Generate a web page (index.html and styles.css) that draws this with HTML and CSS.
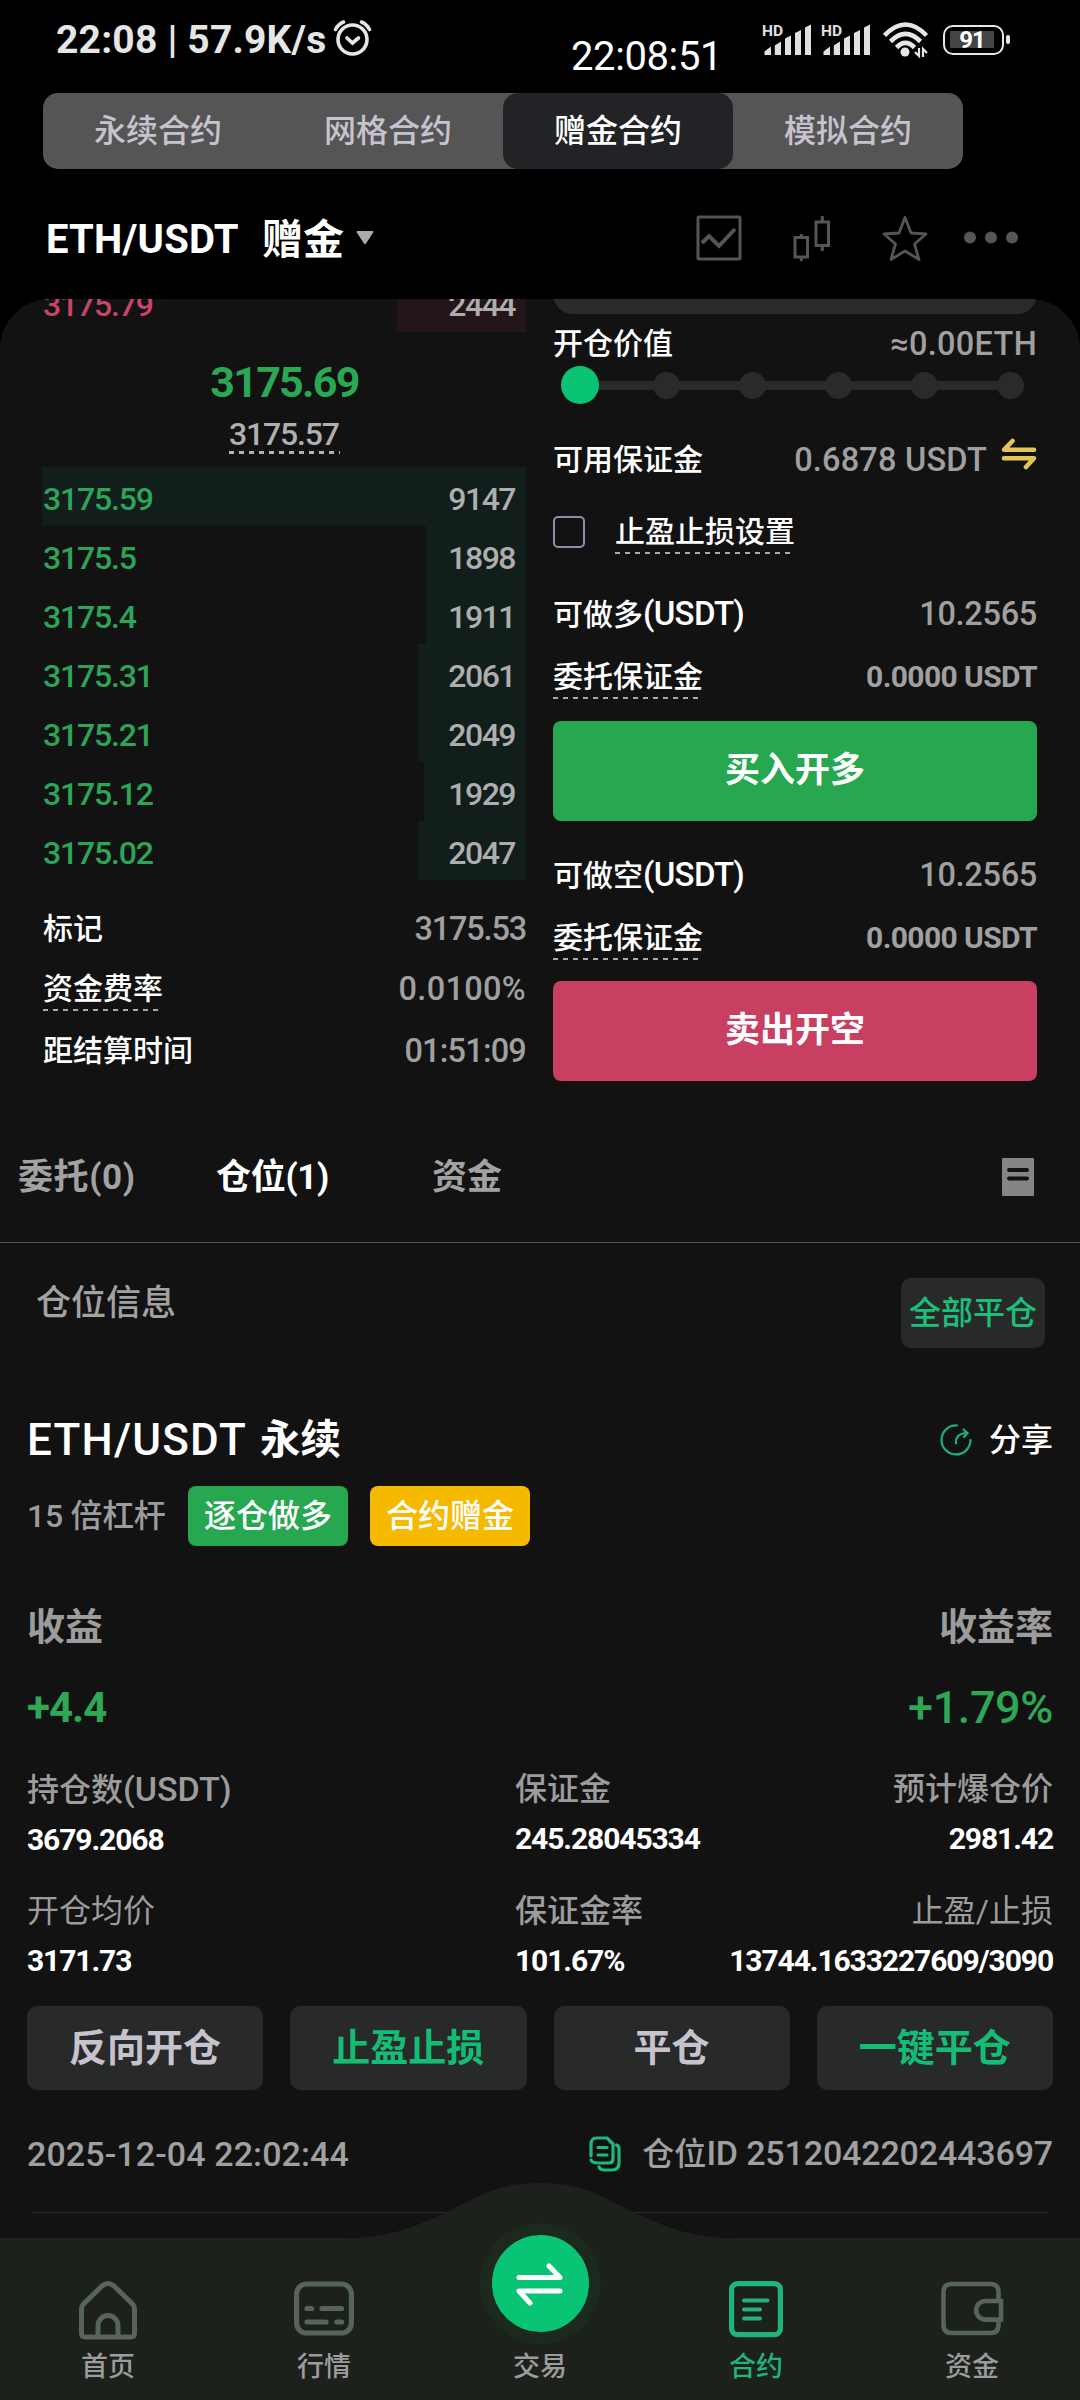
FILE: index.html
```html
<!DOCTYPE html>
<html lang="zh-CN">
<head>
<meta charset="utf-8">
<title>ETH/USDT 赠金合约</title>
<link rel="stylesheet" href="styles.css">
</head>
<body>
<div class="screen">
  <header class="status">
    <span class="status-time">22:08 | 57.9K/s</span>
    <svg class="status-alarm" width="40" height="38" viewBox="0 0 40 38" fill="none" stroke="#e6e6e6" stroke-width="3.6" stroke-linecap="round">
      <circle cx="20.500" cy="20.500" r="14.500"/><path d="M3.500 10.500Q6.500 5 11.500 3M29.500 3Q34.500 5 37.500 10.500M15 19l5.500 5 6-5"/>
    </svg>
    <span class="status-clock">22:08:51</span>
    <svg class="status-signal" width="50" height="34" viewBox="0 0 50 34" fill="#e0e0e0">
      <text class="hd" x="0" y="13">HD</text>
      <path d="M2.500 28.500l6.500-5V32H2.500zM12.800 22.500l6.200-4V32h-6.200zM23 15.500l6-3V32h-6zM33 10l6-3V32h-6zM43 4.500l6-3V32h-6z"/>
    </svg>
    <svg class="status-signal" width="50" height="34" viewBox="0 0 50 34" fill="#e0e0e0">
      <text class="hd" x="0" y="13">HD</text>
      <path d="M2.500 28.500l6.500-5V32H2.500zM12.800 22.500l6.200-4V32h-6.200zM23 15.500l6-3V32h-6zM33 10l6-3V32h-6zM43 4.500l6-3V32h-6z"/>
    </svg>
    <svg class="status-wifi" width="46" height="36" viewBox="0 0 46 36" fill="none" stroke="#e6e6e6" stroke-width="4.600">
      <path d="M1.500 13.500Q22.500-8.500 43.500 13.500M7.500 19.500Q22.500 4.500 37.500 19.500M13.500 25.500Q22.500 16.500 31.500 25.500"/>
      <circle cx="22" cy="30" r="4.500" fill="#e6e6e6" stroke="none"/>
      <path stroke-width="2.200" d="M36 26v8l-4-4M40 35v-8l4 4"/>
    </svg>
    <span class="battery"><span class="battery-level">91</span></span>
    <span class="battery-tip"></span>
  </header>

  <nav class="modes">
    <span class="mode">永续合约</span>
    <span class="mode">网格合约</span>
    <span class="mode mode-on">赠金合约</span>
    <span class="mode">模拟合约</span>
  </nav>

  <div class="pair">
    <span class="pair-name">ETH/USDT</span>
    <span class="pair-kind">赠金</span>
    <svg class="pair-caret" width="18" height="14" viewBox="0 0 18 14"><path d="M1.500 0h15q1.500 0 .7 1.500L10 12.500q-1 1.300-2 0L.8 1.500Q0 0 1.500 0z" fill="#aaa"/></svg>
    <div class="pair-tools">
      <svg width="46" height="46" viewBox="0 0 46 46" fill="none" stroke="#555" stroke-width="3"><rect x="2" y="2" width="42" height="42" rx="1"/><path stroke-width="4" d="M6 28l7-7 10 10 16-17"/></svg>
      <svg width="38" height="46" viewBox="0 0 38 46" fill="none" stroke="#555" stroke-width="3"><path d="M2 22.500h12.500V42H2zM8.300 19v3.500M8.300 42v4M23 7h12.500v23.500H23zM29.300 1v6M29.300 30.500V36"/></svg>
      <svg width="46" height="46" viewBox="0 0 46 46" fill="none" stroke="#555" stroke-width="2.800" stroke-linejoin="round"><path d="M23 2.500l6 15.500 15 1-11.500 10L37 44.500 23 36 9 44.500 13.500 29 2 19l15-1z"/></svg>
      <svg width="54" height="46" viewBox="0 0 54 46" fill="#555"><circle cx="6" cy="22.500" r="6"/><circle cx="27" cy="22.500" r="6"/><circle cx="48" cy="22.500" r="6"/></svg>
    </div>
  </div>

  <main class="panel">
    <section class="trade">
      <div class="book">
        <div class="level ask"><i class="depth" style="width:129px"></i><span>3175.79</span><b>2444</b></div>
        <div class="last">3175.69</div>
        <div class="index">3175.57</div>
        <div class="level"><i class="depth" style="width:484px"></i><span>3175.59</span><b>9147</b></div>
        <div class="level"><i class="depth" style="width:100px"></i><span>3175.5</span><b>1898</b></div>
        <div class="level"><i class="depth" style="width:100px"></i><span>3175.4</span><b>1911</b></div>
        <div class="level"><i class="depth" style="width:108px"></i><span>3175.31</span><b>2061</b></div>
        <div class="level"><i class="depth" style="width:108px"></i><span>3175.21</span><b>2049</b></div>
        <div class="level"><i class="depth" style="width:102px"></i><span>3175.12</span><b>1929</b></div>
        <div class="level"><i class="depth" style="width:108px"></i><span>3175.02</span><b>2047</b></div>
        <div class="stats">
          <div class="stat"><span>标记</span><em class="num num-tight">3175.53</em></div>
          <div class="stat"><span class="dashed">资金费率</span><em class="num num-wide">0.0100%</em></div>
          <div class="stat"><span>距结算时间</span><em class="num num-time">01:51:09</em></div>
        </div>
      </div>

      <div class="form">
        <div class="amount"></div>
        <div class="field f-value"><span>开仓价值</span><em class="num num-wide">≈0.00ETH</em></div>
        <div class="slider"><i class="knob"></i><i class="stop"></i><i class="stop"></i><i class="stop"></i><i class="stop"></i><i class="stop"></i></div>
        <div class="field f-avail"><span>可用保证金</span>
          <em class="num num-avail">0.6878 USDT</em>
          <svg class="swap" width="36" height="32" viewBox="0 0 36 32" fill="none" stroke="#e5c457" stroke-width="4.600" stroke-linecap="round" stroke-linejoin="round"><path d="M33 11.800H3L11.500 3M3 20.200h30L25 29"/></svg>
        </div>
        <div class="field f-check"><i class="checkbox"></i><span class="dashed">止盈止损设置</span></div>
        <div class="field f-can"><span>可做多<small>(USDT)</small></span><em class="num">10.2565</em></div>
        <div class="field f-margin"><span class="dashed">委托保证金</span><em class="din">0.0000 USDT</em></div>
        <button class="order buy">买入开多</button>
        <div class="field f-can2"><span>可做空<small>(USDT)</small></span><em class="num">10.2565</em></div>
        <div class="field f-margin2"><span class="dashed">委托保证金</span><em class="din">0.0000 USDT</em></div>
        <button class="order sell">卖出开空</button>
      </div>
    </section>

    <nav class="tabs">
      <span class="tab">委托(0)</span>
      <span class="tab tab-on">仓位(1)</span>
      <span class="tab">资金</span>
      <svg class="tabs-icon" width="32" height="38" viewBox="0 0 32 38"><rect width="32" height="38" rx="1" fill="#858585"/><path d="M7 12h18M7 20.500h18" stroke="#121212" stroke-width="4" stroke-linecap="round"/></svg>
    </nav>

    <div class="info"><span>仓位信息</span><button class="close-all">全部平仓</button></div>

    <article class="position">
      <div class="title">
        <h2>ETH/USDT</h2><h3>永续</h3>
        <svg class="share-icon" width="32" height="32" viewBox="0 0 32 32" fill="none" stroke="#1fae7a" stroke-width="2.200" stroke-linecap="round"><path d="M17 1.500A14.500 14.500 0 1 0 30.500 16M16 19.500q-1-10 11-10.500M23.500 5.500l4 3.500-3.500 4"/></svg>
        <span class="share">分享</span>
      </div>
      <div class="badges"><span class="lever">15 倍杠杆</span><span class="badge long">逐仓做多</span><span class="badge bonus">合约赠金</span></div>
      <div class="pnl-head"><span>收益</span><span>收益率</span></div>
      <div class="pnl"><span class="pnl-abs">+4.4</span><span class="pnl-pct">+1.79%</span></div>
      <div class="facts">
        <div class="fact"><span>持仓数<small>(USDT)</small></span><b>3679.2068</b></div>
        <div class="fact"><span>保证金</span><b>245.28045334</b></div>
        <div class="fact"><span>预计爆仓价</span><b>2981.42</b></div>
        <div class="fact"><span class="thin">开仓均价</span><b>3171.73</b></div>
        <div class="fact"><span>保证金率</span><b>101.67%</b></div>
        <div class="fact"><span class="thin">止盈/止损</span><b>13744.1633227609/3090</b></div>
      </div>
      <div class="actions">
        <button class="action">反向开仓</button>
        <button class="action action-green">止盈止损</button>
        <button class="action">平仓</button>
        <button class="action action-green">一键平仓</button>
      </div>
      <div class="meta">
        <span class="date">2025-12-04 22:02:44</span>
        <svg class="copy" width="32" height="36" viewBox="0 0 32 36" fill="none" stroke="#1db87b" stroke-width="3.200" stroke-linecap="round" stroke-linejoin="round"><path d="M2 20V8q0-6 6-6h10l6 6v15q0 4-4 4H9q-6 0-7-3M9 11.500h9M9 19h9M27.500 9q2.500 1 2.500 4v14q0 7-7 7h-8q-4 0-5-3"/></svg>
        <span class="pid">仓位<small>ID 2512042202443697</small></span>
      </div>
      <hr>
    </article>
  </main>

  <footer class="dock">
    <svg class="dock-bump" width="440" height="56" viewBox="0 0 440 56"><path d="M0 56H20C75 55 103 40 133 26C160 12 180 0 220 0S280 12 307 26C337 40 365 55 420 56z" fill="#1c211c"/></svg>
    <a class="dock-item">
      <svg width="60" height="60" viewBox="0 0 60 60" fill="none" stroke="#56645a" stroke-width="5" stroke-linejoin="round"><path d="M3.500 29q0-3 2-5L24 6q6-5 12 0l18.500 18q2 2 2 5v24q0 4-4 4h-45q-4 0-4-4zM20 57V45.500a10 10 0 0 1 20 0V57"/></svg>
      <span>首页</span>
    </a>
    <a class="dock-item">
      <svg width="60" height="60" viewBox="0 0 60 60" fill="none" stroke="#56645a" stroke-width="5.200" stroke-linecap="round"><rect x="2.600" y="4" width="54.800" height="49" rx="10"/><path d="M13 28.500h4.500M28 28.500h19.500M13 42h19M43 42h4.500"/></svg>
      <span>行情</span>
    </a>
    <a class="dock-item">
      <span class="trade-button"><svg width="52" height="46" viewBox="0 0 52 46" fill="none" stroke="#fff" stroke-width="5" stroke-linecap="round" stroke-linejoin="round"><path d="M5 16.500h41L35 5M46 30H5l11 12"/></svg></span>
      <span>交易</span>
    </a>
    <a class="dock-item dock-on">
      <svg width="60" height="60" viewBox="0 0 60 60" fill="none" stroke="#20b478" stroke-width="5.200" stroke-linecap="round"><rect x="5.600" y="3.600" width="48.800" height="51" rx="6"/><path stroke-width="4" d="M18 20.500h23.500M18 29.500h16M18 38.500h16"/></svg>
      <span>合约</span>
    </a>
    <a class="dock-item">
      <svg width="64" height="60" viewBox="0 0 64 60" fill="none" stroke="#56645a" stroke-width="4.600"><path d="M58.500 20.500V12q0-8-8-8H11.500q-8 0-8 8v33q0 8 8 8h39q8 0 8-8v-6M61 21H45.500a9.300 9.300 0 0 0 0 18.600H61z"/></svg>
      <span>资金</span>
    </a>
  </footer>
</div>
</body>
</html>
```
FILE: styles.css
```css
* { box-sizing: border-box; }

body {
  margin: 0;
  background: #000;
  color: #fff;
  font-family: Roboto, "Noto Sans CJK SC", sans-serif;
  font-weight: 500;
}

button {
  border: 0;
  padding: 0;
  color: inherit;
  font-family: inherit;
}

b, em, i, small, h2, h3 { margin: 0; font-style: normal; }

.screen {
  width: 1080px;
  height: 2400px;
  overflow: hidden;
  display: flex;
  flex-direction: column;
}

/* status bar */
.status {
  display: flex;
  align-items: flex-start;
  height: 93px;
  padding-left: 56px;
  white-space: nowrap;
  flex: none;
}
.status-time {
  width: 276px;
  margin-top: 20px;
  font-size: 39px;
  line-height: 40px;
  font-weight: 700;
  letter-spacing: 0.2px;
  color: #e6e6e6;
}
.status-alarm { margin-top: 19px; }
.status-clock {
  width: 191px;
  margin: 37px 0 0 199px;
  font-size: 40px;
  line-height: 40px;
  font-weight: 400;
  letter-spacing: -0.4px;
}
.status-signal { margin: 23px 9px 0 0; overflow: visible; }
.hd { font-size: 15.5px; font-weight: 700; }
.status-wifi { margin: 22px 0 0 3px; }
.battery {
  width: 61px;
  height: 30px;
  margin: 25px 0 0 14px;
  padding: 4px 5px;
  border: 2.5px solid #e6e6e6;
  border-radius: 10px;
}
.battery-level {
  display: block;
  width: 44px;
  height: 17px;
  background: #444;
  color: #fff;
  font-size: 24px;
  line-height: 19px;
  font-weight: 700;
  text-align: center;
  letter-spacing: -1px;
}
.battery-tip {
  width: 4px;
  height: 9px;
  margin: 35px 0 0 2px;
  border-radius: 2px;
  background: #e6e6e6;
}

/* contract type switch */
.modes {
  display: flex;
  flex: none;
  width: 920px;
  height: 76px;
  margin-left: 43px;
  border-radius: 15px;
  background: #555;
}
.mode {
  flex: 1;
  border-radius: 15px;
  font-size: 32px;
  line-height: 77px;
  text-align: center;
  color: #c6c3ce;
}
.mode-on { background: #222327; color: #fff; }

/* pair header */
.pair {
  display: flex;
  align-items: center;
  flex: none;
  height: 130px;
  padding: 8px 62px 0 46px;
}
.pair-name {
  width: 216px;
  font-size: 40px;
  line-height: 50px;
  font-weight: 700;
  letter-spacing: 0.2px;
  padding-top: 4px;
}
.pair-kind { font-size: 41px; line-height: 50px; font-weight: 700; padding-top: 3px; }
.pair-caret { margin-left: 12px; }
.pair-tools { display: flex; margin-left: auto; }
.pair-tools svg:nth-child(1) { margin-right: 51px; }
.pair-tools svg:nth-child(2) { margin-right: 51px; }
.pair-tools svg:nth-child(3) { margin-right: 36px; }

/* main panel */
.panel {
  flex: none;
  height: 1939px;
  border-radius: 50px 50px 0 0;
  background: #121212;
  overflow: hidden;
}
.trade {
  display: flex;
  justify-content: space-between;
  height: 782px;
  padding: 0 43px 0 43px;
}
.book { width: 483px; }
.level {
  display: flex;
  position: relative;
  justify-content: space-between;
  height: 59px;
  padding: 3px 11px 0 0;
  font-size: 32px;
  line-height: 59px;
  letter-spacing: -1.2px;
  font-weight: 500;
  color: #2ca559;
}
.level b { position: relative; font-weight: 500; letter-spacing: -1.5px; color: #aeaeae; }
.level span { position: relative; }
.depth {
  position: absolute;
  top: 0;
  right: 0;
  height: 59px;
  background: #121e1b;
}
.ask { margin-top: -26px; color: #c9446a; }
.ask .depth { background: #241518; }
.last {
  margin-top: 24px;
  font-size: 43px;
  line-height: 53px;
  font-weight: 700;
  letter-spacing: -1.7px;
  text-align: center;
  color: #2ba854;
}
.index {
  width: 111px;
  height: 36px;
  margin: 9px auto 13px;
  font-size: 32px;
  line-height: 33px;
  letter-spacing: -1.2px;
  color: #b0b0b0;
  background: repeating-linear-gradient(90deg, #b4b4b4 0 5px, transparent 5px 10px) bottom / 100% 3px no-repeat;
}
.stats { padding-top: 19px; }
.stat {
  display: flex;
  align-items: center;
  justify-content: space-between;
  height: 60px;
  font-size: 30px;
  line-height: 44px;
}
.stat:last-child { margin-top: 2px; }
.num {
  font-size: 32.5px;
  font-weight: 500;
  letter-spacing: -0.3px;
  color: #a0a0a0;
}
.num-tight { letter-spacing: -1.2px; }
.num-time { letter-spacing: -0.8px; }
.num-wide { letter-spacing: 0.3px; }
.dashed {
  height: 44px;
  background: repeating-linear-gradient(90deg, #aaa 0 5px, transparent 5px 10px) bottom / 100% 2px no-repeat;
}

/* order form */
.form { width: 484px; }
.amount {
  height: 40px;
  margin-top: -25px;
  border-radius: 22px;
  background: #292a2a;
}
.field {
  display: flex;
  align-items: center;
  justify-content: space-between;
  height: 40px;
  font-size: 30px;
  line-height: 44px;
  white-space: nowrap;
}
.field small { font-size: 33px; letter-spacing: -0.7px; font-weight: 500; }
.f-value { margin-top: 10px; }
.slider {
  display: flex;
  align-items: center;
  justify-content: space-between;
  height: 38px;
  margin-top: 2px;
  padding: 0 13px 0 8px;
  background: linear-gradient(#292a2a, #292a2a) 20px center / 440px 9px no-repeat;
}
.knob { width: 38px; height: 38px; border-radius: 50%; background: #08c474; margin-right: -5px; }
.stop { width: 27px; height: 27px; border-radius: 50%; background: #292a2a; }
.f-avail { margin-top: 36px; }
.num-avail { margin-left: auto; letter-spacing: 0.2px; }
.swap { margin: -12px 0 0 14px; }
.f-check { height: 44px; margin-top: 30px; justify-content: flex-start; }
.checkbox {
  width: 32px;
  height: 32px;
  margin-right: 30px;
  border: 2.5px solid #8b8fae;
  border-radius: 5px;
}
.f-can { margin-top: 40px; }
.f-margin { height: 44px; margin-top: 21px; }
.f-can2 { margin-top: 34px; }
.f-margin2 { height: 44px; margin-top: 21px; }
.din {
  font-size: 30px;
  font-weight: 700;
  letter-spacing: -0.6px;
  color: #a0a0a0;
}
.order {
  display: block;
  width: 484px;
  height: 100px;
  margin-top: 21px;
  border-radius: 8px;
  font-size: 35px;
  line-height: 100px;
  font-weight: 700;
}
.buy { margin-top: 22px; background: #27a74f; }
.sell { background: #c83f62; }

/* section tabs */
.tabs {
  display: flex;
  align-items: center;
  height: 131px;
  margin-top: 31px;
  padding: 0 46px 0 18px;
  border-bottom: 1px solid #555;
  font-size: 35px;
  line-height: 50px;
  font-weight: 700;
  color: #a2a2a2;
}
.tab { padding-top: 2px; }
.tab:nth-child(1) { width: 198px; letter-spacing: 0.6px; }
.tab:nth-child(2) { width: 216px; letter-spacing: -0.3px; }
.tab-on { color: #fff; }
.tabs-icon { margin-left: auto; }

.info {
  display: flex;
  justify-content: space-between;
  height: 70px;
  margin-top: 35px;
  padding: 0 35px 0 36px;
  font-size: 35px;
  line-height: 51px;
  color: #a2a2a2;
}
.close-all {
  width: 144px;
  height: 70px;
  border-radius: 10px;
  background: #282929;
  font-size: 32px;
  line-height: 70px;
  font-weight: 500;
  color: #18c07c;
}

/* position card */
.position { padding: 0 27px; }
.title {
  display: flex;
  align-items: center;
  height: 60px;
  margin-top: 62px;
  line-height: 60px;
}
.title h2 { width: 233px; font-size: 44px; font-weight: 500; letter-spacing: 1.2px; }
.title h3 { font-size: 40.5px; font-weight: 700; }
.share-icon { margin-left: auto; margin-right: 17px; }
.share { font-size: 32px; }
.badges {
  display: flex;
  height: 60px;
  margin-top: 16px;
  font-size: 32px;
  line-height: 61px;
}
.lever { width: 161px; font-weight: 500; letter-spacing: -0.3px; color: #9c9c9c; white-space: nowrap; }
.badge { width: 160px; border-radius: 8px; text-align: center; }
.long { background: #27a74f; }
.bonus { margin-left: 22px; background: #f5b900; }
.pnl-head {
  display: flex;
  justify-content: space-between;
  height: 50px;
  margin-top: 56px;
  font-size: 38px;
  line-height: 50px;
  font-weight: 700;
  color: #9c9c9c;
}
.pnl {
  display: flex;
  justify-content: space-between;
  height: 50px;
  margin-top: 31px;
  line-height: 50px;
  color: #2fa856;
}
.pnl-abs { font-size: 42px; font-weight: 700; letter-spacing: -1px; }
.pnl-pct { font-size: 45px; letter-spacing: -0.4px; }
.facts {
  display: grid;
  grid-template-columns: 488px 200px 1fr;
  row-gap: 31px;
  margin-top: 36px;
}
.fact {
  display: flex;
  flex-direction: column;
  gap: 10px;
  font-size: 32px;
  line-height: 40px;
  font-weight: 500;
  color: #9c9c9c;
  white-space: nowrap;
}
.fact small { font-size: 34px; letter-spacing: 0; }
.fact:nth-child(3n) { align-items: flex-end; }
.fact b { font-size: 30px; font-weight: 700; letter-spacing: -1.1px; color: #fff; }
.fact .thin { font-weight: 400; color: #9c9c9c; }
.actions {
  display: grid;
  grid-template-columns: repeat(4, 1fr);
  gap: 27px;
  margin-top: 25px;
}
.action {
  height: 84px;
  border-radius: 10px;
  background: #282929;
  font-size: 38px;
  line-height: 84px;
  font-weight: 700;
  color: #c6c3ce;
}
.action-green { color: #14bd76; }
.meta {
  display: flex;
  align-items: center;
  height: 40px;
  margin-top: 44px;
  font-size: 32px;
  line-height: 41px;
  font-weight: 500;
  color: #a0a0a0;
}
.date { font-size: 34px; letter-spacing: 0.1px; }
.copy { margin-left: auto; margin-right: 21px; }
.pid small { font-size: 34px; letter-spacing: -0.15px; }
hr { height: 1px; margin: 38px 5px 0; border: 0; background: #2a2a2a; }

/* bottom dock */
.dock {
  position: relative;
  display: flex;
  flex: none;
  height: 162px;
  background: #1c211c;
}
.dock-bump { position: absolute; top: -55px; left: 320px; }
.dock-item {
  position: relative;
  display: flex;
  flex: 1;
  flex-direction: column;
  align-items: center;
  justify-content: flex-end;
  padding-bottom: 16px;
  gap: 10px;
  font-size: 27px;
  line-height: 34px;
  font-weight: 500;
  color: #9c9c9c;
}
.dock-item > svg { flex: none; }
.dock-on { color: #20b478; }
.trade-button {
  display: flex;
  align-items: center;
  justify-content: center;
  flex: none;
  width: 121px;
  height: 121px;
  margin-bottom: -4px;
  border: 12px solid #1b2a1d;
  border-radius: 50%;
  background: #08c474;
}
```
